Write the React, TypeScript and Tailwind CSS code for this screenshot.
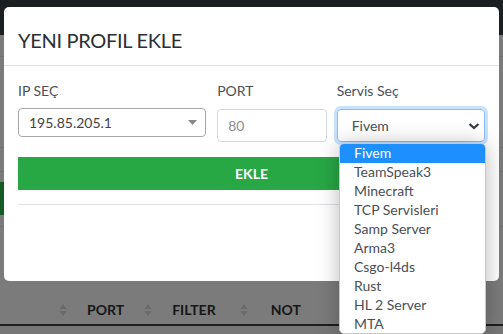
import React from "react";

const items = [
  "Fivem",
  "TeamSpeak3",
  "Minecraft",
  "TCP Servisleri",
  "Samp Server",
  "Arma3",
  "Csgo-l4ds",
  "Rust",
  "HL 2 Server",
  "MTA",
];

function SortIcon() {
  return (
    <svg width="8" height="14" viewBox="0 0 8 14" className="shrink-0">
      <path d="M4 1 L7.5 6 L0.5 6 Z" fill="#6a6a6a" />
      <path d="M4 13 L7.5 8 L0.5 8 Z" fill="#6a6a6a" />
    </svg>
  );
}

export default function App() {
  return (
    <div
      className="relative w-[503px] h-[334px] overflow-hidden bg-[#7b7b7b]"
      style={{ fontFamily: "Lato, 'Open Sans', sans-serif" }}
    >
      {/* page behind overlay */}
      <div className="flex flex-col h-full">
        <div className="h-[35px] bg-[#1c1f22] shrink-0" />
        <div className="h-[22px] shrink-0 border-b border-[#727272]" />
        <div className="h-[91px] shrink-0 border-b border-[#727272]" />
        <div className="h-[24px] shrink-0 border-b border-[#727272]" />
        <div className="h-[10px] shrink-0" />
        <div className="h-[33px] shrink-0 bg-[#145a24] w-[40px]" />
        <div className="h-[12px] shrink-0 border-b border-[#727272]" />
        <div className="h-[68px] shrink-0" />
        <div className="h-[31px] shrink-0 flex items-center border-b-2 border-[#1e1e1e] text-[14px] font-bold text-[#161616]">
          <div className="w-[59px]" />
          <SortIcon />
          <span className="ml-[20px]">PORT</span>
          <div className="w-[20px]" />
          <SortIcon />
          <span className="ml-[20px]">FILTER</span>
          <div className="w-[24px]" />
          <SortIcon />
          <span className="ml-[23px]">NOT</span>
        </div>
        <div className="flex-1 bg-[#777777]" />
      </div>

      {/* modal */}
      <div className="absolute left-[4px] top-[7px] w-[495px] h-[274px] bg-white rounded-[5px] flex flex-col">
        <div className="h-[59px] border-b border-[#e1e1e8] flex items-center px-[14px] shrink-0">
          <h5 className="text-[20px] text-[#2b2f33] leading-none mt-[8px] tracking-[-0.3px]">YENI PROFIL EKLE</h5>
        </div>
        <div className="px-[14px] pt-[15px] flex flex-col">
          <div className="flex items-start">
            <div className="w-[189px] flex flex-col">
              <label className="text-[14px] text-[#4a5056] leading-[20px]">IP SEÇ</label>
              <div className="mt-[7px] h-[29px] border border-[#a8a8a8] rounded-[4px] flex items-center pl-[10px] pr-[8px] text-[14px] text-[#444]">
                <span className="flex-1">195.85.205.1</span>
                <svg width="9" height="5" viewBox="0 0 9 5">
                  <path d="M0 0 L9 0 L4.5 5 Z" fill="#888" />
                </svg>
              </div>
            </div>
            <div className="w-[110px] ml-[11px] flex flex-col">
              <label className="text-[14px] text-[#4a5056] leading-[20px]">PORT</label>
              <div className="mt-[8px] h-[33px] border border-[#d4d8dc] rounded-[4px] flex items-center pl-[10px] text-[14px] text-[#8a8f94]">
                80
              </div>
            </div>
            <div className="w-[149px] ml-[10px] flex flex-col">
              <label className="text-[14px] text-[#4a5056] leading-[20px]">Servis Seç</label>
              <div className="mt-[8px] h-[33px] border border-[#86bdfa] rounded-[4px] shadow-[0_0_0_3px_rgba(0,123,255,0.22)] flex items-center pl-[14px] pr-[4px] text-[14px] text-[#495057]">
                <span className="flex-1">Fivem</span>
                <svg width="12" height="8" viewBox="0 0 12 8">
                  <path d="M1.5 2 L6 6 L10.5 2" stroke="#343a40" strokeWidth="2.2" fill="none" />
                </svg>
              </div>
            </div>
          </div>
          <div className="mt-[15px] h-[33px] bg-[#28a745] flex items-center justify-center text-white text-[14px] font-bold">
            EKLE
          </div>
          <div className="mt-[14px] border-t border-[#dee2e6]" />
        </div>
      </div>

      {/* dropdown popup */}
      <div className="absolute left-[339px] top-[143px] w-[147px] h-[191px] bg-white rounded-[5px] border border-[#c8c8c8] shadow-[0_2px_22px_rgba(0,0,0,0.28)] overflow-hidden flex flex-col">
        {items.map((it, i) => (
          <div
            key={it}
            className={
              i === 0
                ? "h-[19px] shrink-0 flex items-center pl-[14px] pb-[2px] text-[14px] text-white bg-[#1e8fff]"
                : "h-[19px] shrink-0 flex items-center pl-[14px] pb-[2px] text-[14px] text-[#4a4f55]"
            }
          >
            {it}
          </div>
        ))}
      </div>
    </div>
  );
}
